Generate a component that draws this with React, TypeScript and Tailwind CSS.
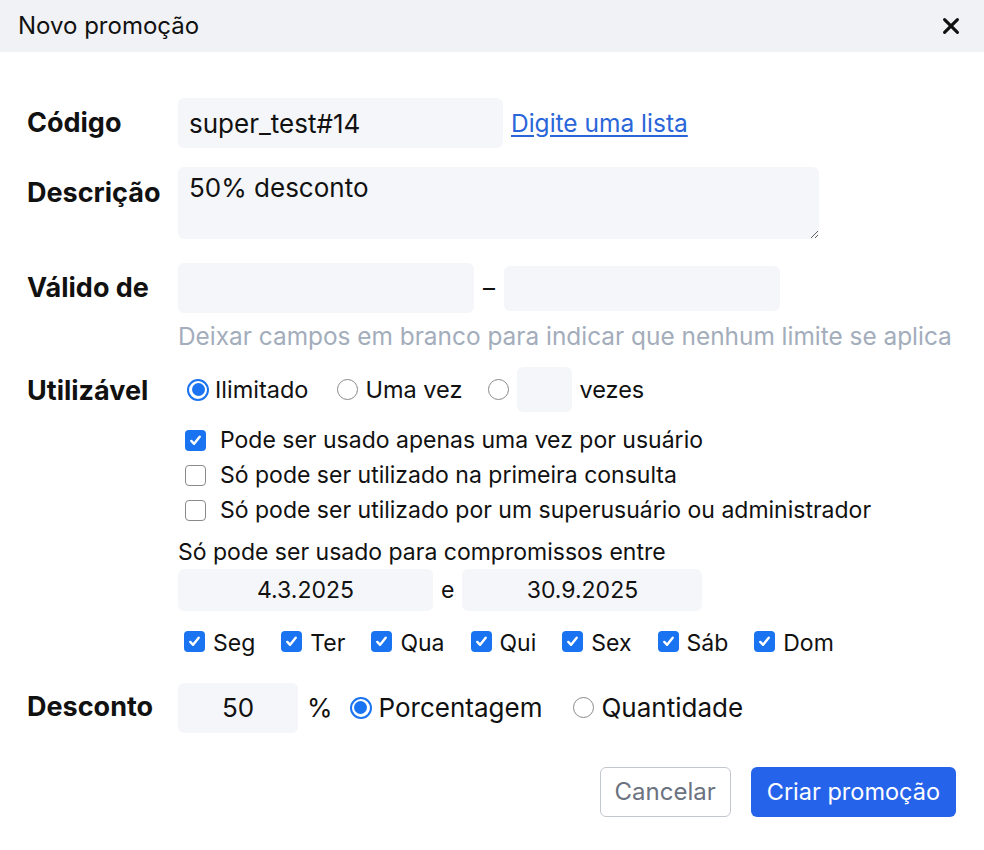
import React from "react"

const field = "bg-[#f4f6f9] rounded-md outline-none"

function Check({ checked = false }: { checked?: boolean }) {
  return checked ? (
    <span className="flex h-[21px] w-[21px] shrink-0 items-center justify-center rounded-[4px] bg-[#1a73f0]">
      <svg viewBox="0 0 16 16" className="h-[15px] w-[15px]" fill="none" stroke="white" strokeWidth="2.6" strokeLinecap="round" strokeLinejoin="round">
        <path d="M3.5 8.5 6.5 11.5 12.5 4" />
      </svg>
    </span>
  ) : (
    <span className="h-[21px] w-[21px] shrink-0 rounded-[4px] border border-[#8a8a8a] bg-white" />
  )
}

function Radio({ checked = false }: { checked?: boolean }) {
  return checked ? (
    <span className="flex h-[22px] w-[22px] shrink-0 items-center justify-center rounded-full border-[2.5px] border-[#1a73f0] bg-white">
      <span className="h-[13px] w-[13px] rounded-full bg-[#1a73f0]" />
    </span>
  ) : (
    <span className="h-[21px] w-[21px] shrink-0 rounded-full border border-[#8a8a8a] bg-white" />
  )
}

function Label({ children }: { children: React.ReactNode }) {
  return <div className="w-[151px] shrink-0 text-[27px] font-bold text-[#111]">{children}</div>
}

const days = ["Seg", "Ter", "Qua", "Qui", "Sex", "Sáb", "Dom"]

export default function App() {
  return (
    <div className="min-h-[850px] w-[984px] bg-white text-[#111] [font-family:Inter,'Liberation_Sans',sans-serif]">
      {/* header */}
      <div className="flex h-[52px] items-center justify-between bg-[#f0f2f5] pl-[18px] pr-[22px]">
        <span className="text-[24px]">Novo promoção</span>
        <svg viewBox="0 0 24 24" className="h-[22px] w-[22px]" fill="none" stroke="#111" strokeWidth="3.4" strokeLinecap="round">
          <path d="M5 5l14 14M19 5 5 19" />
        </svg>
      </div>

      <div className="pl-[27px] pr-[28px]">
        {/* Código */}
        <div className="mt-[46px] flex items-center">
          <Label>Código</Label>
          <input readOnly value="super_test#14" className={`${field} h-[50px] w-[325px] px-[11px] text-[26px]`} />
          <a href="#" className="ml-[8px] text-[24.5px] text-[#2a66d9] underline underline-offset-[3px]">
            Digite uma lista
          </a>
        </div>

        {/* Descrição */}
        <div className="mt-[19px] flex items-start">
          <div className="pt-[6px]">
            <Label>Descrição</Label>
          </div>
          <textarea readOnly value="50% desconto" className={`${field} h-[72px] w-[641px] px-[11px] pt-[5px] text-[26px] leading-[32px]`} />
        </div>

        {/* Válido de */}
        <div className="mt-[24px] flex items-center">
          <Label>Válido de</Label>
          <input readOnly className={`${field} h-[50px] w-[296px]`} />
          <span className="mx-[9px] text-[24px]">–</span>
          <input readOnly className={`${field} h-[45px] w-[276px]`} />
        </div>
        <div className="ml-[151px] mt-[8px] text-[24.4px] leading-[30px] text-[#a3adbb]">
          Deixar campos em branco para indicar que nenhum limite se aplica
        </div>

        {/* Utilizável */}
        <div className="mt-[16px] flex items-center">
          <div className="pt-[4px]">
            <Label>Utilizável</Label>
          </div>
          <div className="flex items-center text-[23.5px]">
            <span className="ml-[9px] flex items-center gap-[6px]">
              <Radio checked />
              Ilimitado
            </span>
            <span className="ml-[29px] flex items-center gap-[7px]">
              <Radio />
              Uma vez
            </span>
            <span className="ml-[26px] flex items-center">
              <Radio />
              <input readOnly className={`${field} ml-[8px] h-[45px] w-[55px]`} />
              <span className="ml-[7px]">vezes</span>
            </span>
          </div>
        </div>

        {/* options */}
        <div className="ml-[151px] mt-[18px] flex flex-col gap-[14px] text-[23px] leading-[21px]">
          <label className="flex items-center gap-[14px] pl-[7px]">
            <Check checked />
            Pode ser usado apenas uma vez por usuário
          </label>
          <label className="flex items-center gap-[14px] pl-[7px]">
            <Check />
            Só pode ser utilizado na primeira consulta
          </label>
          <label className="flex items-center gap-[14px] pl-[7px]">
            <Check />
            Só pode ser utilizado por um superusuário ou administrador
          </label>
        </div>

        <div className="ml-[151px] mt-[17px] text-[23px] leading-[28px]">Só pode ser usado para compromissos entre</div>
        <div className="ml-[151px] mt-[3px] flex items-center text-[23px]">
          <input readOnly value="4.3.2025" className={`${field} h-[42px] w-[255px] text-center`} />
          <span className="mx-[8px]">e</span>
          <input readOnly value="30.9.2025" className={`${field} h-[42px] w-[240px] text-center`} />
        </div>

        <div className="ml-[151px] mt-[11px] flex items-center text-[23px]">
          {days.map((d, i) => (
            <span key={d} className={`flex items-center gap-[8px] ${i > 0 ? "ml-[26px]" : "ml-[6px]"}`}>
              <Check checked />
              <span className="pt-[4px]">{d}</span>
            </span>
          ))}
        </div>

        {/* Desconto */}
        <div className="mt-[22px] flex items-center">
          <Label>Desconto</Label>
          <input readOnly value="50" className={`${field} h-[50px] w-[120px] text-center text-[26px]`} />
          <span className="ml-[9px] text-[26px]">%</span>
          <span className="ml-[17px] flex items-center gap-[7px] text-[26px]">
            <Radio checked />
            Porcentagem
          </span>
          <span className="ml-[31px] flex items-center gap-[7px] text-[26px]">
            <Radio />
            Quantidade
          </span>
        </div>

        {/* buttons */}
        <div className="mt-[34px] flex justify-end gap-[20px]">
          <button className="h-[50px] rounded-md border border-[#c3c7ce] bg-white px-[14px] text-[24px] text-[#6b7280]">
            Cancelar
          </button>
          <button className="h-[50px] rounded-md bg-[#2563eb] px-[16px] text-[23.5px] text-white">Criar promoção</button>
        </div>
      </div>
    </div>
  )
}
